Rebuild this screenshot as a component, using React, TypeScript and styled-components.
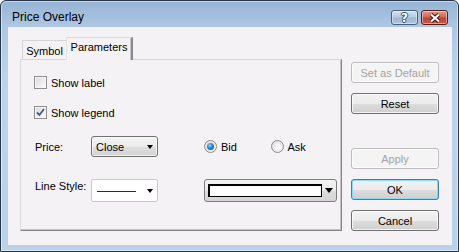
import React from 'react'
import styled, { createGlobalStyle, css } from 'styled-components'

const GlobalStyle = createGlobalStyle`
	html, body {
		margin: 0;
		padding: 0;
		background: #ffffff;
	}
	body {
		font-family: "Liberation Sans", Arial, sans-serif;
		font-size: 11px;
		color: #000000;
	}
`

const Window = styled.div`
	width: 459px;
	height: 252px;
	box-sizing: border-box;
	border: 1px solid #25364a;
	border-radius: 6px 6px 0 0;
	background: linear-gradient(180deg, #97b4d6 0%, #adc6e3 10%, #bdd3eb 30%, #bad1ea 100%);
	box-shadow: inset 0 0 0 1px rgba(255, 255, 255, 0.5);
	display: flex;
	flex-direction: column;
	overflow: hidden;
`

const TitleBar = styled.div`
	height: 27px;
	box-sizing: border-box;
	display: flex;
	align-items: flex-start;
	padding: 8px 10px 0 11px;
`

const Title = styled.div`
	flex: 1;
	font-size: 12px;
	line-height: 16px;
	color: #000000;
`

const CaptionButtons = styled.div`
	display: flex;
	gap: 3px;
	margin-top: 1px;
`

const CaptionButton = styled.div<{ $close?: boolean }>`
	width: 27px;
	height: 15px;
	box-sizing: border-box;
	border: 1px solid ${(p) => (p.$close ? '#5a1c16' : '#4b5f7a')};
	border-radius: 3px;
	display: flex;
	align-items: center;
	justify-content: center;
	box-shadow: inset 0 0 0 1px rgba(255, 255, 255, 0.45);
	background: ${(p) =>
		p.$close
			? 'linear-gradient(180deg, #e19a8b 0%, #cf6a58 45%, #bd4432 55%, #c75a45 100%)'
			: 'linear-gradient(180deg, #d4e2f1 0%, #b7cbe3 45%, #9fb8d6 55%, #adc4df 100%)'};
`

const HelpGlyph = styled.span`
	font-family: "DejaVu Sans", sans-serif;
	font-weight: bold;
	font-size: 12px;
	line-height: 12px;
	color: #ffffff;
	text-shadow: -1px 0 #3a4a60, 1px 0 #3a4a60, 0 -1px #3a4a60, 0 1px #3a4a60;
`

const Client = styled.div`
	flex: 1;
	margin: 0 6px 6px 7px;
	background: #f5f2f5;
	display: flex;
	gap: 9px;
	padding: 10px 13px 14px 12px;
`

const TabArea = styled.div`
	width: 322px;
	display: flex;
	flex-direction: column;
`

const TabStrip = styled.div`
	height: 22px;
	display: flex;
	align-items: flex-end;
	padding-left: 2px;
	position: relative;
	z-index: 1;
`

const Tab = styled.div<{ $active?: boolean }>`
	box-sizing: border-box;
	display: flex;
	align-items: center;
	justify-content: center;
	border: 1px solid #d6d2d6;
	border-bottom: none;
	background: #f5f2f5;
	font-size: 11px;
	${(p) =>
		p.$active
			? css`
					width: 67px;
					height: 23px;
					margin-bottom: -1px;
					padding-bottom: 4px;
					border-right: 2px solid #8a8a8a;
					border-top-color: #dcd8dc;
					border-left-color: #e4e0e4;
					box-shadow: inset -1px 0 0 #c8c4c8;
				`
			: css`
					width: 44px;
					height: 19px;
					padding-top: 1px;
					border-right: none;
				`}
`

const Panel = styled.div`
	flex: 1;
	box-sizing: border-box;
	border-top: 1px solid #d8d4d8;
	border-left: 1px solid #dcd8dc;
	border-right: 1px solid #858585;
	border-bottom: 1px solid #858585;
	box-shadow: inset -1px -1px 0 #c6c2c6;
	padding: 16px 13px 0 13px;
	display: flex;
	flex-direction: column;
`

const CheckRow = styled.label`
	display: flex;
	align-items: center;
	gap: 4px;
	height: 13px;
	& + & {
		margin-top: 17px;
	}
`

const CheckBox = styled.span`
	width: 13px;
	height: 13px;
	box-sizing: border-box;
	border: 1px solid #8f8f8f;
	background: linear-gradient(135deg, #d9d9d9 0%, #f2f2f2 70%, #ffffff 100%);
	box-shadow: inset 0 0 0 1px #f4f4f4;
	display: flex;
	align-items: center;
	justify-content: center;
`

const FieldGrid = styled.div`
	margin-top: 17px;
	display: grid;
	grid-template-columns: 57px 67px 46px 133px;
	grid-template-rows: 21px 23px;
	row-gap: 22px;
`

const FieldLabel = styled.div<{ $top: number }>`
	grid-column: 1;
	padding-left: 1px;
	line-height: 13px;
	margin-top: ${(p) => p.$top}px;
`

const ComboBox = styled.div`
	grid-column: 2;
	box-sizing: border-box;
	border: 1px solid #707070;
	border-radius: 3px;
	background: linear-gradient(180deg, #f3f3f3 0%, #ececec 50%, #dedede 52%, #d2d2d2 100%);
	box-shadow: inset 0 0 0 1px rgba(255, 255, 255, 0.7);
	display: flex;
	align-items: center;
	padding: 0 4px 0 4px;
`

const ComboText = styled.span`
	flex: 1;
	line-height: 14px;
`

const Arrow = styled.span<{ $w: number }>`
	width: 0;
	height: 0;
	border-left: ${(p) => p.$w / 2}px solid transparent;
	border-right: ${(p) => p.$w / 2}px solid transparent;
	border-top: ${(p) => Math.ceil(p.$w / 2)}px solid #000000;
`

const LineCombo = styled.div`
	grid-column: 2;
	box-sizing: border-box;
	border: 1px solid #c9c9c9;
	border-radius: 2px;
	background: #ffffff;
	display: flex;
	align-items: center;
	padding: 0 4px 0 5px;
	gap: 11px;
`

const LineSample = styled.span`
	width: 40px;
	height: 1px;
	margin-top: 1px;
	background: #102a80;
`

const RadioGroup = styled.div`
	grid-column: 4;
	display: flex;
	align-items: center;
`

const RadioOption = styled.label`
	width: 70px;
	display: flex;
	align-items: center;
	gap: 4px;
`

const RadioDot = styled.span<{ $checked?: boolean }>`
	width: 13px;
	height: 13px;
	box-sizing: border-box;
	border-radius: 50%;
	border: 1px solid #8c8c8c;
	background: radial-gradient(circle at 60% 60%, #ffffff 0%, #e6e6e6 60%, #cfcfcf 100%);
	display: flex;
	align-items: center;
	justify-content: center;
	&::after {
		content: '';
		display: ${(p) => (p.$checked ? 'block' : 'none')};
		width: 7px;
		height: 7px;
		border-radius: 50%;
		background: radial-gradient(circle at 40% 35%, #8fd2ff 0%, #2a86d0 45%, #0d3f7a 100%);
	}
`

const ColorCombo = styled.div`
	grid-column: 4;
	box-sizing: border-box;
	border: 1px solid #7d7d7d;
	border-radius: 3px;
	background: linear-gradient(180deg, #f3f3f3 0%, #e8e8e8 50%, #dcdcdc 52%, #d6d6d6 100%);
	display: flex;
	align-items: center;
	padding: 0 3px 0 3px;
	gap: 3px;
`

const ColorSwatch = styled.span`
	flex: 1;
	height: 13px;
	box-sizing: border-box;
	border: 1px solid #000000;
	border-top-width: 2px;
	border-left-width: 2px;
	background: #ffffff;
`

const ButtonColumn = styled.div`
	width: 88px;
	display: flex;
	flex-direction: column;
	padding-top: 25px;
`

const Button = styled.div<{ $disabled?: boolean; $default?: boolean; $gap: number }>`
	height: 21px;
	box-sizing: border-box;
	margin-top: ${(p) => p.$gap}px;
	border: 1px solid ${(p) => (p.$disabled ? '#bdbdbd' : p.$default ? '#3c7fb1' : '#707070')};
	border-radius: 3px;
	display: flex;
	align-items: center;
	justify-content: center;
	color: ${(p) => (p.$disabled ? '#a3a3a3' : '#000000')};
	background: ${(p) =>
		p.$disabled
			? '#f4f4f4'
			: 'linear-gradient(180deg, #f2f2f2 0%, #ebebeb 50%, #dddddd 52%, #cfcfcf 100%)'};
	box-shadow: ${(p) =>
		p.$default ? 'inset 0 0 0 1px #8fd8f8' : 'inset 0 0 0 1px rgba(255, 255, 255, 0.75)'};
`

export default function App() {
	return (
		<>
			<GlobalStyle />
			<Window>
				<TitleBar>
					<Title>Price Overlay</Title>
					<CaptionButtons>
						<CaptionButton>
							<HelpGlyph>?</HelpGlyph>
						</CaptionButton>
						<CaptionButton $close>
							<svg width="12" height="10" viewBox="0 0 12 10">
								<path d="M2 1.5 L10 8.5 M10 1.5 L2 8.5" stroke="#4a1510" strokeWidth="4" />
								<path d="M2 1.5 L10 8.5 M10 1.5 L2 8.5" stroke="#ffffff" strokeWidth="2" />
							</svg>
						</CaptionButton>
					</CaptionButtons>
				</TitleBar>
				<Client>
					<TabArea>
						<TabStrip>
							<Tab>Symbol</Tab>
							<Tab $active>Parameters</Tab>
						</TabStrip>
						<Panel>
							<CheckRow>
								<CheckBox />
								<span>Show label</span>
							</CheckRow>
							<CheckRow>
								<CheckBox>
									<svg width="9" height="9" viewBox="0 0 9 9">
										<path d="M1 4.5 L3.5 7 L8 1" fill="none" stroke="#46598a" strokeWidth="1.8" />
									</svg>
								</CheckBox>
								<span>Show legend</span>
							</CheckRow>
							<FieldGrid>
								<FieldLabel $top={5}>Price:</FieldLabel>
								<ComboBox>
									<ComboText>Close</ComboText>
									<Arrow $w={7} />
								</ComboBox>
								<RadioGroup>
									<RadioOption>
										<RadioDot $checked />
										<span>Bid</span>
									</RadioOption>
									<RadioOption>
										<RadioDot />
										<span>Ask</span>
									</RadioOption>
								</RadioGroup>
								<FieldLabel $top={1}>Line Style:</FieldLabel>
								<LineCombo>
									<LineSample />
									<Arrow $w={7} />
								</LineCombo>
								<ColorCombo>
									<ColorSwatch />
									<Arrow $w={9} />
								</ColorCombo>
							</FieldGrid>
						</Panel>
					</TabArea>
					<ButtonColumn>
						<Button $disabled $gap={0}>Set as Default</Button>
						<Button $gap={10}>Reset</Button>
						<Button $disabled $gap={34}>Apply</Button>
						<Button $default $gap={10}>OK</Button>
						<Button $gap={10}>Cancel</Button>
					</ButtonColumn>
				</Client>
			</Window>
		</>
	)
}
